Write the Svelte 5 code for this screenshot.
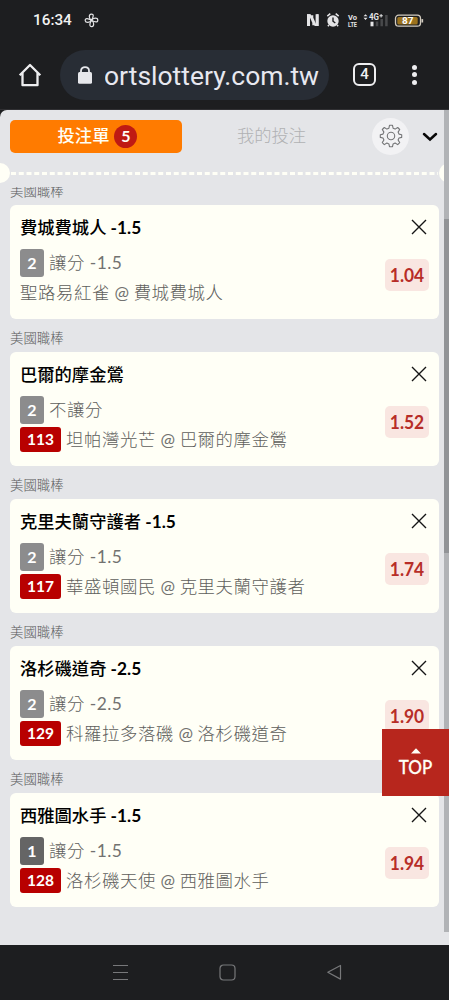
<script>
  const bets = [
    { team: '費城費城人', line: ' -1.5', num: '2', type: '讓分', code: '', away: '聖路易紅雀', home: '費城費城人', odds: '1.04' },
    { team: '巴爾的摩金鶯', line: '', num: '2', type: '不讓分', code: '113', away: '坦帕灣光芒', home: '巴爾的摩金鶯', odds: '1.52' },
    { team: '克里夫蘭守護者', line: ' -1.5', num: '2', type: '讓分', code: '117', away: '華盛頓國民', home: '克里夫蘭守護者', odds: '1.74' },
    { team: '洛杉磯道奇', line: ' -2.5', num: '2', type: '讓分', code: '129', away: '科羅拉多落磯', home: '洛杉磯道奇', odds: '1.90' },
    { team: '西雅圖水手', line: ' -1.5', num: '1', type: '讓分', code: '128', away: '洛杉磯天使', home: '西雅圖水手', odds: '1.94' }
  ];
</script>

<div class="screen">
  <header class="status">
    <span class="time">16:34</span>
    <svg class="fan" width="15" height="15" viewBox="0 0 15 15" fill="none" stroke="#e4e4e6" stroke-width="1.2">
      <path d="M7.5 7.3C4.7 5.8 4.5 1.4 7.3 1.1C10 .9 9.7 3.8 7.5 7.3Z" />
      <path d="M7.5 7.3C9 4.5 13.6 4.5 13.8 7C14 9.7 11 9.4 7.5 7.3Z" />
      <path d="M7.5 7.3C10.3 8.8 10.4 13.3 7.8 13.6C5.2 13.8 5.4 10.8 7.5 7.3Z" />
      <path d="M7.5 7.3C6 10.1 1.5 10.1 1.2 7.6C1 5 4 5.2 7.5 7.3Z" />
    </svg>
    <svg class="indicators" width="118" height="18" viewBox="0 0 118 18">
      <path d="M2 15V4.3H4.1L7.3 11.6V14.2M6.3 4.2V7L9.3 14H11.5V3.2" fill="none" stroke="#e4e4e6" stroke-width="2" />
      <path d="M1 3.2h3v11.9H1zM9.6 3.2h3v11.9h-3z" fill="#e4e4e6" />
      <circle cx="27" cy="10" r="5.7" fill="#e4e4e6" />
      <path d="M21.3 5.2l3-2.5M32.7 5.2l-3-2.5M22.9 14l-1 1.2M31.1 14l1 1.2" stroke="#e4e4e6" stroke-width="1.5" />
      <path d="M27 6.5V10.2L29.3 12" fill="none" stroke="#1d1e20" stroke-width="1.4" />
      <g fill="#e4e4e6" class="tiny">
        <text x="42" y="8.5" font-size="7.6" textLength="9" lengthAdjust="spacingAndGlyphs">Vo</text>
        <text x="42" y="15.5" font-size="7.6" textLength="9" lengthAdjust="spacingAndGlyphs">LTE</text>
        <text x="63" y="8.9" font-size="8.4" textLength="10" lengthAdjust="spacingAndGlyphs">4G</text>
        <path d="M57.5 5.3l2-2.1 2 2.1zM57.5 6.8l2 2.1 2-2.1zM73.4 4.2h1.2V3h1v1.2h1.2v1h-1.2v1.2h-1V5.2h-1.2z" />
        <rect x="64.5" y="10.7" width="3" height="4.6" />
      </g>
      <path d="M71 10.5v4.8M75.7 8v7.3M80.4 4v11.3" stroke="#48494b" stroke-width="2.5" />
      <rect x="89.5" y="4.2" width="25" height="11" rx="3.2" fill="#1d1e20" stroke="#d2cbbf" stroke-width="1.3" />
      <rect x="91.3" y="5.9" width="20.4" height="7.7" rx="1.5" fill="#9b721d" />
      <path d="M116.3 8.1v3.4" stroke="#d2cbbf" stroke-width="1.7" />
      <text x="96" y="13" font-size="9.4" fill="#fff" class="tiny" textLength="11.5" lengthAdjust="spacingAndGlyphs">87</text>
    </svg>
  </header>

  <div class="toolbar">
    <svg class="home" width="24" height="24" viewBox="0 0 24 24" fill="none" stroke="#eeeef0" stroke-width="2.3">
      <path d="M1.7 12.2 12 2l10.3 10.2M4.5 10v12.2h15V10" stroke-linejoin="round" />
    </svg>
    <div class="address">
      <svg width="16" height="20" viewBox="0 0 16 20">
        <path d="M4 8V5.7C4 .8 12 .8 12 5.7V8" fill="none" stroke="#e7e8ec" stroke-width="1.8" />
        <rect x="1" y="7" width="14" height="11.7" rx="1.5" fill="#e7e8ec" />
      </svg>
      <div class="url"><svg width="216" height="34"><text x="-1" y="27" textLength="215" lengthAdjust="spacingAndGlyphs">ortslottery.com.tw</text></svg></div>
    </div>
    <span class="tabs-count">4</span>
    <span class="dots"><i></i><i></i><i></i></span>
  </div>

  <main>
    <div class="tabs">
      <div class="tab active">投注單<b>5</b></div>
      <div class="tab">我的投注</div>
      <span class="gear">
        <svg width="24" height="24" viewBox="0 0 24 24" fill="none" stroke="#747577" stroke-width="1.1">
          <path d="M10.5 1.3h3l.6 2.9 2 .9 2.6-1.6 2 2-1.6 2.6.9 2 2.7.6v2.7l-2.7.6-.9 2 1.6 2.6-2 2-2.6-1.6-2 .9-.6 2.8h-3l-.6-2.8-2-.9-2.6 1.6-2-2L4.900 16l-.9-2-2.7-.6v-2.7l2.7-.6.9-2-1.600-2.600 2-2 2.600 1.600 2-.9z" stroke-linejoin="round" />
          <circle cx="12" cy="12" r="3.7" />
        </svg>
      </span>
      <svg class="chevron" width="16" height="12" viewBox="0 0 16 12"><path d="M2 3l6 5.500 6-5.500" fill="none" stroke="#080808" stroke-width="2.5" stroke-linecap="round" /></svg>
    </div>
    <div class="perforation"><svg width="449" height="3"><path d="M11 1.5H438" stroke="#fffff6" stroke-width="2.8" stroke-dasharray="5 2.75" /></svg></div>

    <div class="list">
      {#each bets as bet}
        <section>
          <h2>美國職棒</h2>
          <article>
            <div class="info">
              <h3>{bet.team}<strong>{bet.line}</strong></h3>
              <p class="type"><span class="num" class:dark={bet.num === '1'}>{bet.num}</span>{bet.type}<span class="latin">{bet.line}</span></p>
              <p class="game">{#if bet.code}<span class="code">{bet.code}</span>{/if}{bet.away}<span class="latin at">{' @ '}</span>{bet.home}</p>
            </div>
            <div class="side">
              <svg width="16" height="16" viewBox="0 0 16 16"><path d="M1 1l14 14M15 1L1 15" stroke="#151515" stroke-width="1.4" /></svg>
              <span class="odds"><span>{bet.odds}</span></span>
            </div>
          </article>
        </section>
      {/each}
    </div>

    <div class="track"><div class="thumb"></div></div>
    <div class="top">
      <svg width="10" height="6" viewBox="0 0 10 6"><path d="M0 5.5L5 .3l5 5.2z" fill="#fffff6" /></svg>
      <span>TOP</span>
    </div>
  </main>

  <nav>
    <svg width="17" height="17" viewBox="0 0 17 17"><path d="M1 1.5h15M1 8.5h15M1 15.5h15" /></svg>
    <svg width="17" height="17" viewBox="0 0 17 17"><rect x="1" y="1" width="15" height="15" rx="3.5" /></svg>
    <svg width="17" height="17" viewBox="0 0 17 17"><path d="M14.5 1.5v13.6L1.8 8.3z" stroke-linejoin="round" /></svg>
  </nav>
</div>

<style>
  .screen { width: 449px; height: 1000px; display: flex; flex-direction: column; overflow: hidden; background: #1d1e20; font-family: Lato, "Noto Sans CJK TC", sans-serif; }
  h2, h3, p { margin: 0; font-weight: 400; white-space: nowrap; }
  svg { display: block; flex: none; }
  .status { height: 40px; display: flex; align-items: center; box-sizing: border-box; padding-left: 33px; color: #f2f2f2; }
  .time { font: 500 15.3px Roboto, sans-serif; width: 51px; }
  .indicators { margin-left: 207px; }
  .tiny { font-family: Roboto, sans-serif; font-weight: 700; }
  .toolbar { height: 70px; display: flex; align-items: center; box-sizing: border-box; padding-left: 18px; border-bottom: 1px solid #303033; }
  .address { width: 269px; height: 50px; margin-left: 18px; border-radius: 25px; background: #282d35; display: flex; align-items: center; box-sizing: border-box; padding-left: 17px; }
  .url { margin-left: 12px; overflow: hidden; }
  .url text { font: 400 26.5px Roboto, sans-serif; fill: #e7e8f0; }
  .tabs-count { width: 23px; height: 23px; box-sizing: border-box; margin-left: 24px; border: 2.3px solid #eeeef0; border-radius: 6px; color: #f0f0f2; font: 500 15px/19px Roboto, sans-serif; text-align: center; }
  .dots { margin-left: 35.5px; display: flex; flex-direction: column; gap: 2.5px; }
  .dots i { width: 5px; height: 5px; border-radius: 50%; background: #eeeef0; }

  main { position: relative; height: 835px; background: #e4e5e8; display: flex; flex-direction: column; border-radius: 7px 0 0 0; overflow: hidden; }
  .tabs { height: 52px; flex: none; display: flex; align-items: center; padding-left: 10px; }
  .tab { width: 172px; height: 33px; border-radius: 5px; display: flex; align-items: center; justify-content: center; gap: 5px; font-size: 17.3px; line-height: 24px; color: #b0b1b3; font-weight: 300; }
  .tab + .tab { width: 179px; }
  .tab.active { background: #ff7b00; color: #fffff6; font-weight: 500; box-sizing: border-box; padding-left: 3px; }
  .tab b { width: 23px; height: 23px; border-radius: 50%; background: #bf1a13; text-align: center; font-size: 16px; line-height: 22px; font-weight: 700; }
  .gear { width: 37px; height: 37px; margin-left: 11px; border-radius: 50%; background: #f2f2f4; display: grid; place-items: center; }
  .gear svg { margin-top: -1px; }
  .chevron { margin-left: 12.5px; margin-top: 2px; }
  .perforation { position: relative; height: 25px; flex: none; box-sizing: border-box; padding-top: 10px; }
  .perforation::before, .perforation::after { content: ""; position: absolute; top: 1px; width: 20px; height: 20px; border-radius: 50%; background: #fffff6; }
  .perforation::before { left: -10px; }
  .perforation::after { left: 439px; }
  .list { flex: 1; overflow: hidden; display: flex; flex-direction: column; }
  section { height: 147px; flex: none; padding: 0 10px; }
  section:first-child { margin-top: -15px; }
  h2 { height: 33px; font-size: 13.4px; line-height: 39px; color: #58595b; font-weight: 300; }
  article { width: 429px; height: 114px; box-sizing: border-box; padding: 11px 10px 0; border-radius: 6px; background: #fffff6; display: flex; justify-content: space-between; }
  h3 { font-size: 17.3px; line-height: 24px; font-weight: 500; color: #000; white-space: pre; }
  h3 strong { font-weight: 700; }
  .type, .game { display: flex; align-items: center; font-size: 17.4px; line-height: 26px; letter-spacing: .58px; color: #5e5e5c; font-weight: 300; white-space: pre; }
  .latin { font-weight: 400; color: #727270; letter-spacing: .4px; }
  .at { letter-spacing: .1px; }
  .type { height: 28px; margin-top: 9px; }
  .game { height: 25px; margin-top: 3px; }
  .num, .code { box-sizing: border-box; border-radius: 3px; color: #fff; font-weight: 700; text-align: center; margin-right: 5px; letter-spacing: 0; }
  .num { width: 24px; height: 28px; background: #8c8c8d; font-size: 16px; line-height: 28px; }
  .num.dark { background: #656565; }
  .code { width: 41px; height: 25px; background: #b80000; font-size: 15.5px; line-height: 25px; }
  .type, .game { padding-bottom: 0; }
  .side { display: flex; flex-direction: column; align-items: flex-end; padding-top: 3px; }
  .side svg { margin-right: 2.5px; }
  .odds { width: 44px; height: 32px; margin-top: 24px; border-radius: 5px; background: #f9e6e1; color: #b72d27; font-weight: 700; font-size: 17.4px; line-height: 31px; text-align: center; }
  .odds span { display: inline-block; transform: scaleY(1.08); }
  .track { position: absolute; right: 0; top: 0; width: 5px; height: 822px; background: #b1b3b6; }
  .thumb { margin-top: 109px; height: 334px; background: #929497; }
  .top { position: absolute; left: 382px; top: 619px; width: 67px; height: 67px; background: #b7261d; color: #fffff6; display: flex; flex-direction: column; align-items: center; box-sizing: border-box; padding-top: 19px; font-size: 17px; line-height: 26px; font-weight: 500; }
  .top span { transform: scaleY(1.1); -webkit-text-stroke: .25px #fffff6; }
  nav { height: 55px; display: flex; justify-content: center; gap: 90px; align-items: center; padding-left: 6px; }
  nav svg { fill: none; stroke: #77787a; stroke-width: 1.2; }
</style>
